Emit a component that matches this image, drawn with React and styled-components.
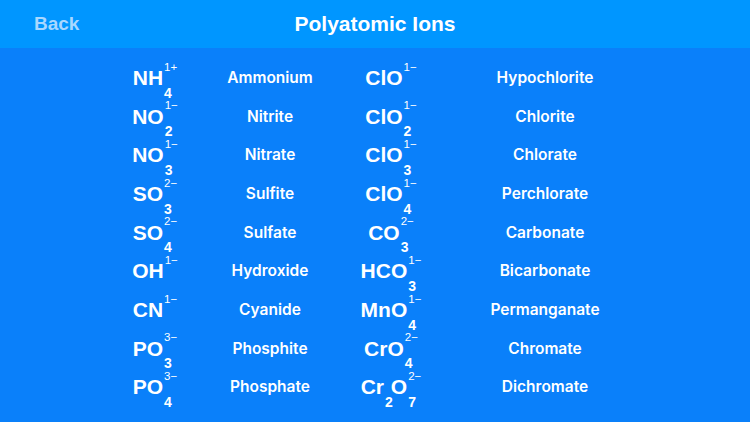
import React from "react";
import styled, { createGlobalStyle } from "styled-components";

const GlobalStyle = createGlobalStyle`
  html, body {
    margin: 0;
    padding: 0;
    background: #0a80fa;
  }
  body {
    font-family: "Liberation Sans", Arial, sans-serif;
    color: #ffffff;
  }
`;

const Page = styled.div`
  min-height: 100vh;
  background: #0a80fa;
`;

const NavBar = styled.header`
  height: 48px;
  background: #0096ff;
  display: grid;
  grid-template-columns: 1fr auto 1fr;
  align-items: center;
  padding: 0 34px;
`;

const BackButton = styled.span`
  font-size: 19px;
  font-weight: 700;
  color: #a9d8ff;
  justify-self: start;
`;

const Title = styled.h1`
  margin: 0;
  font-size: 21px;
  font-weight: 700;
  color: #ffffff;
`;

const Table = styled.div`
  display: grid;
  grid-auto-rows: 38.7px;
  padding: 10px 0 0 100px;
`;

const Row = styled.div`
  display: grid;
  grid-template-columns: 110px 120px 122px 186px;
  grid-template-rows: 100%;
  align-items: center;
`;

const FormulaCell = styled.div`
  display: flex;
  justify-content: center;
`;

const Formula = styled.span`
  display: inline-flex;
  align-items: center;
`;

const Base = styled.span`
  font-size: 21px;
  line-height: 21px;
  font-weight: 700;
`;

// charge on top, atom count underneath, both hugging the element symbol
const Scripts = styled.span`
  display: inline-flex;
  flex-direction: column;
  align-items: flex-start;
  gap: 13px;
  margin-top: 6.5px;
  margin-left: 1px;
  margin-right: ${(p) => (p.$tight ? "-2px" : "0")};
`;

const Sup = styled.span`
  font-size: 11.5px;
  line-height: 11px;
  height: 11px;
  font-weight: 400;
  white-space: nowrap;
`;

const Sub = styled.span`
  font-size: 14px;
  line-height: 14px;
  height: 14px;
  font-weight: 700;
`;

const Name = styled.div`
  text-align: center;
  font-family: Inter, "Liberation Sans", sans-serif;
  font-size: 15.5px;
  font-weight: 600;
`;

const ions = [
  [
    { f: [{ b: "NH", sup: "1+", sub: "4" }], name: "Ammonium" },
    { f: [{ b: "ClO", sup: "1−" }], name: "Hypochlorite" },
  ],
  [
    { f: [{ b: "NO", sup: "1−", sub: "2" }], name: "Nitrite" },
    { f: [{ b: "ClO", sup: "1−", sub: "2" }], name: "Chlorite" },
  ],
  [
    { f: [{ b: "NO", sup: "1−", sub: "3" }], name: "Nitrate" },
    { f: [{ b: "ClO", sup: "1−", sub: "3" }], name: "Chlorate" },
  ],
  [
    { f: [{ b: "SO", sup: "2−", sub: "3" }], name: "Sulfite" },
    { f: [{ b: "ClO", sup: "1−", sub: "4" }], name: "Perchlorate" },
  ],
  [
    { f: [{ b: "SO", sup: "2−", sub: "4" }], name: "Sulfate" },
    { f: [{ b: "CO", sup: "2−", sub: "3" }], name: "Carbonate" },
  ],
  [
    { f: [{ b: "OH", sup: "1−" }], name: "Hydroxide" },
    { f: [{ b: "HCO", sup: "1−", sub: "3" }], name: "Bicarbonate" },
  ],
  [
    { f: [{ b: "CN", sup: "1−" }], name: "Cyanide" },
    { f: [{ b: "MnO", sup: "1−", sub: "4" }], name: "Permanganate" },
  ],
  [
    { f: [{ b: "PO", sup: "3−", sub: "3" }], name: "Phosphite" },
    { f: [{ b: "CrO", sup: "2−", sub: "4" }], name: "Chromate" },
  ],
  [
    { f: [{ b: "PO", sup: "3−", sub: "4" }], name: "Phosphate" },
    {
      f: [
        { b: "Cr", sub: "2" },
        { b: "O", sup: "2−", sub: "7" },
      ],
      name: "Dichromate",
    },
  ],
];

function IonFormula({ parts }) {
  return (
    <Formula>
      {parts.map((p, i) => (
        <React.Fragment key={i}>
          <Base>{p.b}</Base>
          <Scripts $tight={i < parts.length - 1}>
            <Sup>{p.sup || ""}</Sup>
            <Sub>{p.sub || ""}</Sub>
          </Scripts>
        </React.Fragment>
      ))}
    </Formula>
  );
}

export default function App() {
  return (
    <Page>
      <GlobalStyle />
      <NavBar>
        <BackButton>Back</BackButton>
        <Title>Polyatomic Ions</Title>
      </NavBar>
      <Table>
        {ions.map((row, i) => (
          <Row key={i}>
            {row.map((ion) => (
              <React.Fragment key={ion.name}>
                <FormulaCell>
                  <IonFormula parts={ion.f} />
                </FormulaCell>
                <Name>{ion.name}</Name>
              </React.Fragment>
            ))}
          </Row>
        ))}
      </Table>
    </Page>
  );
}
